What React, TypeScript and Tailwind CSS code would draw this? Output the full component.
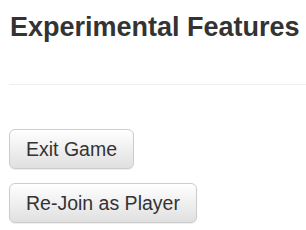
export default function App() {
  return (
    <div className="min-h-screen bg-white pl-[9px] font-['Liberation_Sans',Arial,sans-serif] text-[#333]">
      <h3 className="ml-px pt-[12px] text-[27px] font-bold leading-[30px] whitespace-nowrap">
        Experimental Features
      </h3>
      <hr className="mt-[42px] border-t border-[#eee]" />
      <div className="mt-[44px] flex flex-col items-start gap-[14px]">
        <button className="h-10 rounded-[6px] border border-[#ccc] bg-gradient-to-b from-white to-[#e0e0e0] px-4 text-[19.5px] leading-6 text-[#333] shadow-[0_1px_1px_rgba(0,0,0,0.075)]">
          Exit Game
        </button>
        <button className="h-10 rounded-[6px] border border-[#ccc] bg-gradient-to-b from-white to-[#e0e0e0] px-4 text-[19.5px] leading-6 text-[#333] shadow-[0_1px_1px_rgba(0,0,0,0.075)]">
          Re-Join as Player
        </button>
      </div>
    </div>
  );
}
